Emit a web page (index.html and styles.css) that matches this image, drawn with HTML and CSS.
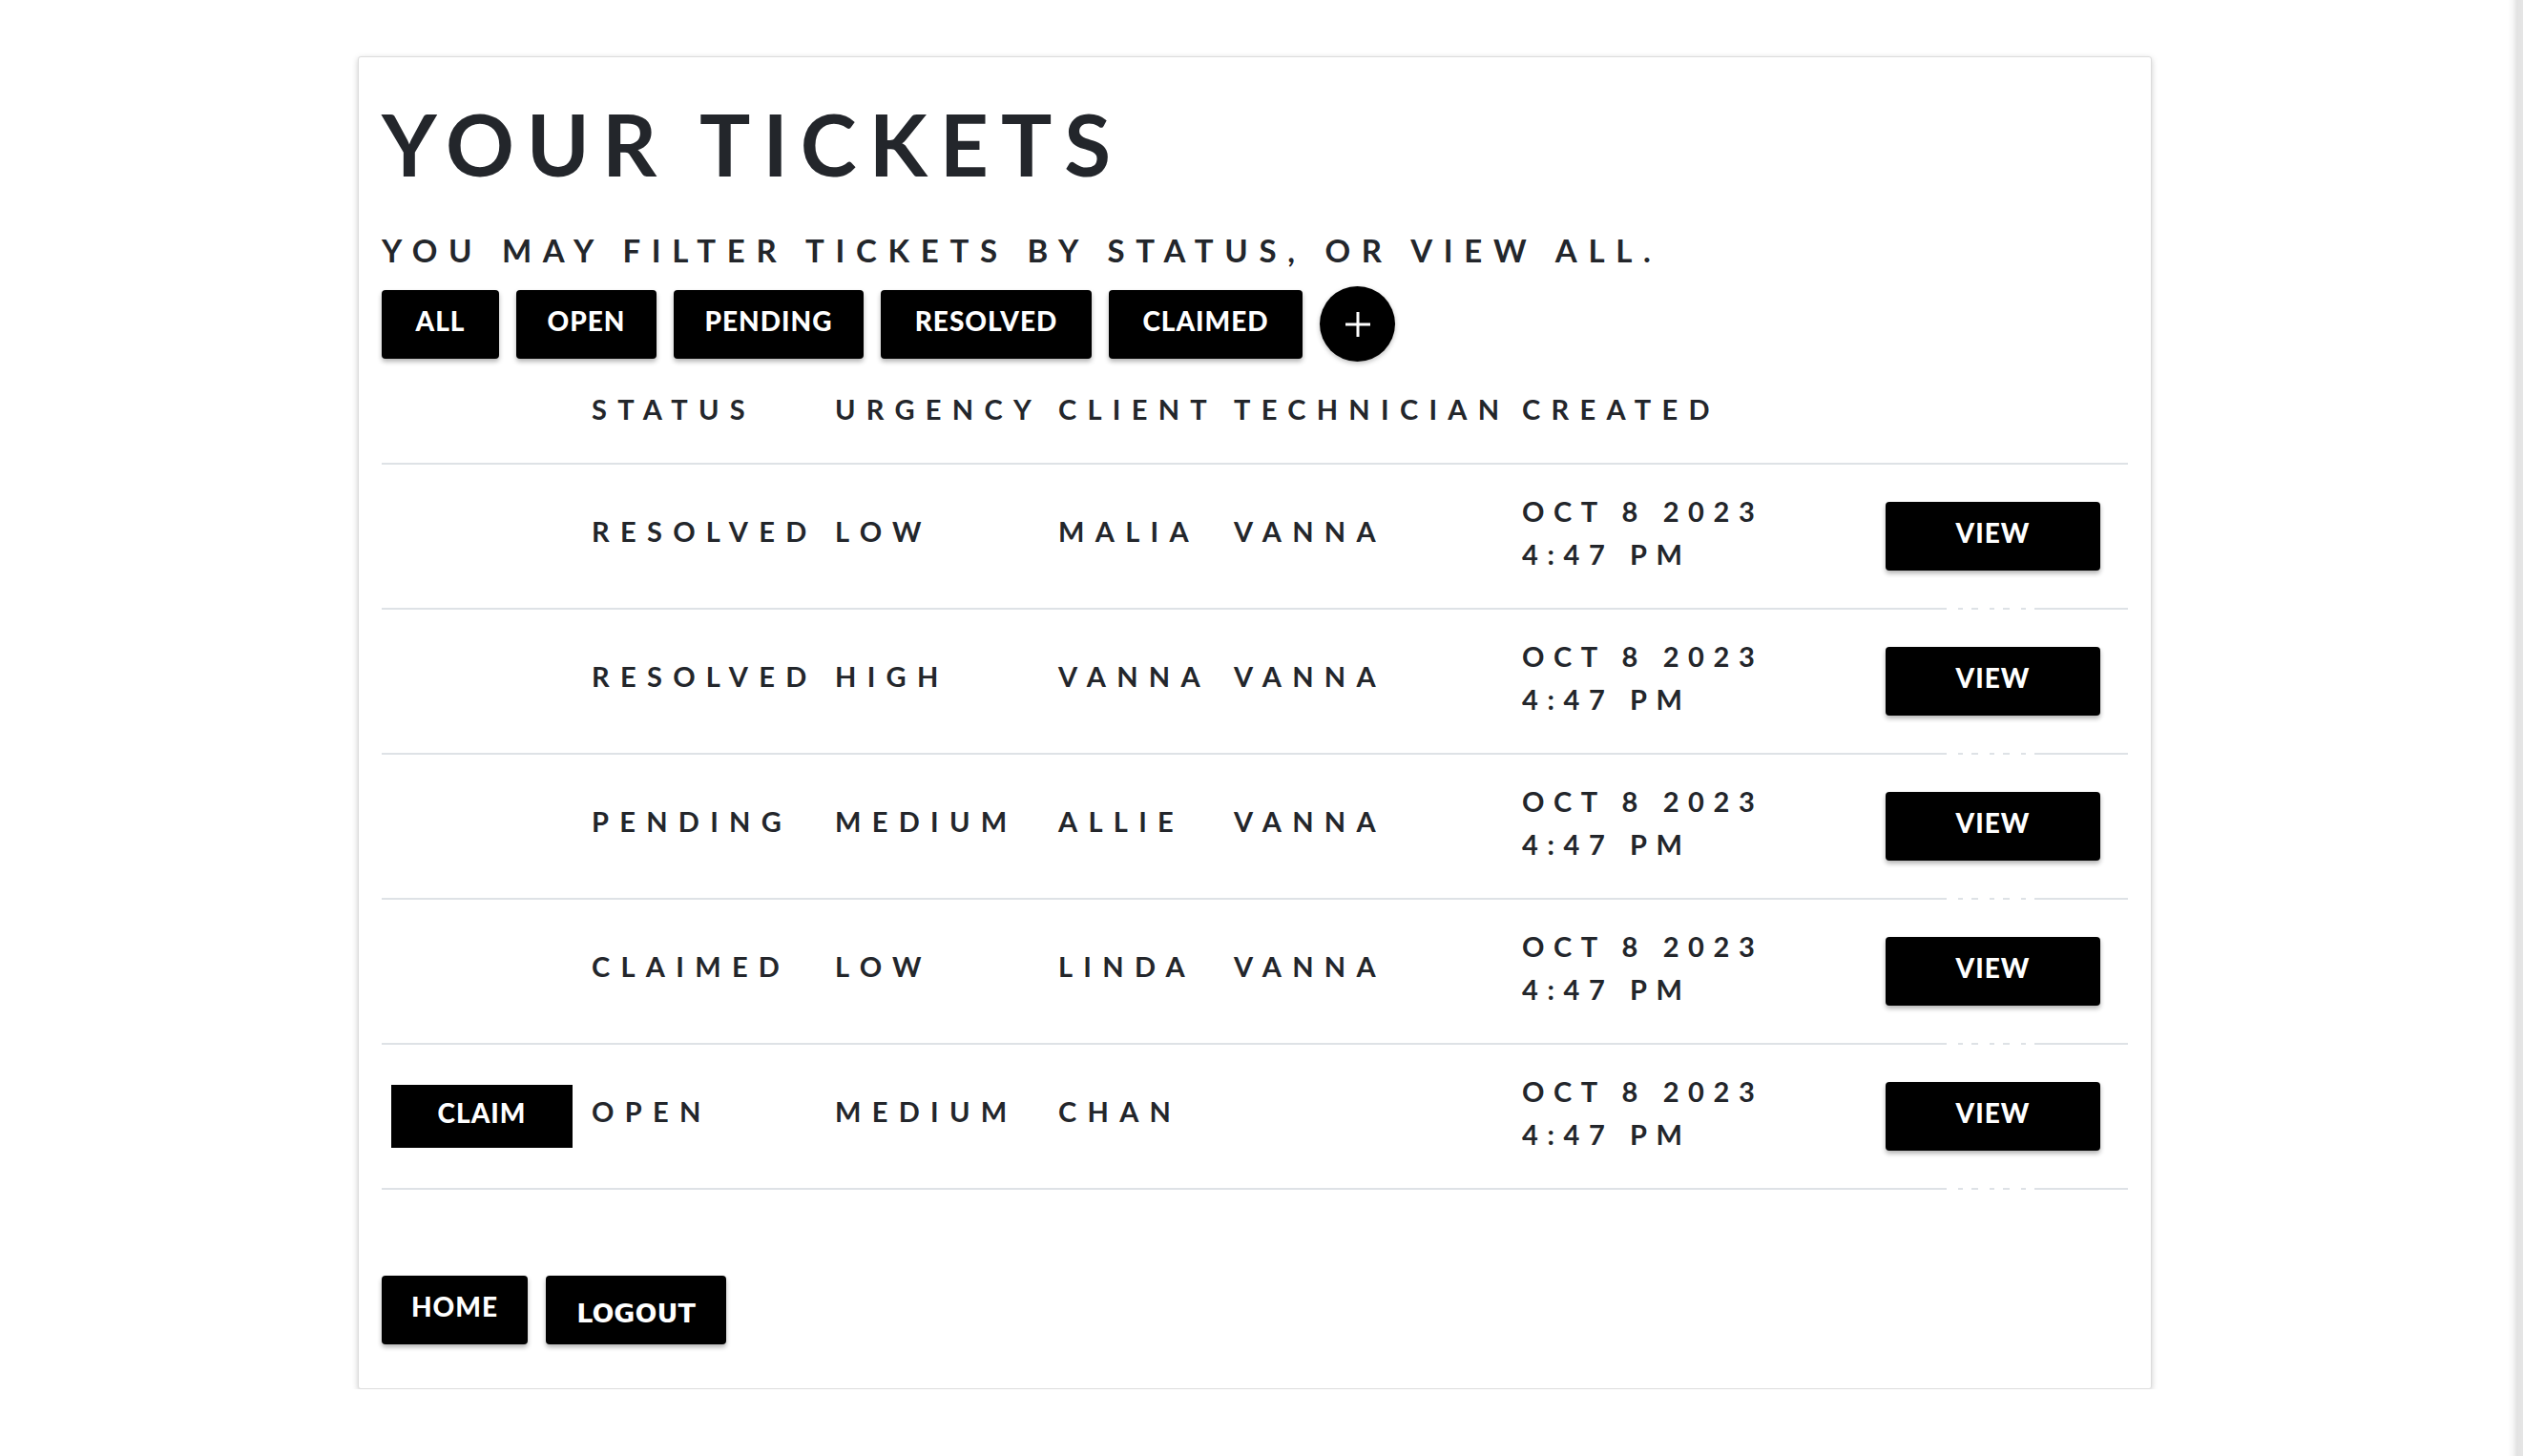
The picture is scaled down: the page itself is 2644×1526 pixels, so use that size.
FILE: index.html
```html
<!DOCTYPE html>
<html lang="en">
<head>
<meta charset="utf-8">
<title>Your Tickets</title>
<link rel="stylesheet" href="styles.css">
</head>
<body>
<div class="edge"></div>
<main class="card">
  <h1 class="title">YOUR TICKETS</h1>
  <p class="subtitle">YOU MAY FILTER TICKETS BY STATUS, OR VIEW ALL.</p>
  <div class="filters">
    <button class="btn f-all">ALL</button>
    <button class="btn f-open">OPEN</button>
    <button class="btn f-pending">PENDING</button>
    <button class="btn f-resolved">RESOLVED</button>
    <button class="btn f-claimed">CLAIMED</button>
    <button class="add" aria-label="New ticket">
      <svg width="28" height="28" viewBox="0 0 28 28"><path d="M14 1v26M1 14h26" stroke="#fff" stroke-width="3" fill="none"/></svg>
    </button>
  </div>

  <div class="table">
    <div class="thead">
      <span></span>
      <span class="th">STATUS</span>
      <span class="th">URGENCY</span>
      <span class="th">CLIENT</span>
      <span class="th">TECHNICIAN</span>
      <span class="th">CREATED</span>
      <span></span>
    </div>

    <div class="row">
      <span></span>
      <span class="td">RESOLVED</span>
      <span class="td">LOW</span>
      <span class="td">MALIA</span>
      <span class="td">VANNA</span>
      <span class="td date">OCT 8 2023<br>4:47 PM</span>
      <span class="action"><button class="btn view">VIEW</button></span>
      <span class="ghost"></span>
    </div>

    <div class="row">
      <span></span>
      <span class="td">RESOLVED</span>
      <span class="td">HIGH</span>
      <span class="td">VANNA</span>
      <span class="td">VANNA</span>
      <span class="td date">OCT 8 2023<br>4:47 PM</span>
      <span class="action"><button class="btn view">VIEW</button></span>
      <span class="ghost"></span>
    </div>

    <div class="row">
      <span></span>
      <span class="td">PENDING</span>
      <span class="td">MEDIUM</span>
      <span class="td">ALLIE</span>
      <span class="td">VANNA</span>
      <span class="td date">OCT 8 2023<br>4:47 PM</span>
      <span class="action"><button class="btn view">VIEW</button></span>
      <span class="ghost"></span>
    </div>

    <div class="row">
      <span></span>
      <span class="td">CLAIMED</span>
      <span class="td">LOW</span>
      <span class="td">LINDA</span>
      <span class="td">VANNA</span>
      <span class="td date">OCT 8 2023<br>4:47 PM</span>
      <span class="action"><button class="btn view">VIEW</button></span>
      <span class="ghost"></span>
    </div>

    <div class="row last">
      <span class="claimcell"><button class="claim">CLAIM</button></span>
      <span class="td">OPEN</span>
      <span class="td">MEDIUM</span>
      <span class="td">CHAN</span>
      <span class="td"></span>
      <span class="td date">OCT 8 2023<br>4:47 PM</span>
      <span class="action"><button class="btn view">VIEW</button></span>
      <span class="ghost"></span>
    </div>
  </div>

  <div class="footer">
    <button class="btn home">HOME</button>
    <button class="btn logout">LOGOUT</button>
  </div>
</main>
</body>
</html>
```

FILE: styles.css
```css
html, body {
  margin: 0;
  padding: 0;
  background: #ffffff;
}

body {
  padding-right: 14px;
  font-family: "Lato", "Inter", sans-serif;
  color: #212529;
}

.edge {
  position: fixed;
  top: 0;
  right: 0;
  bottom: 0;
  width: 16px;
  background: linear-gradient(90deg, rgba(0,0,0,0) 0, rgba(0,0,0,0.03) 30%, rgba(0,0,0,0.11) 60%, rgba(0,0,0,0.1) 100%);
}

.card {
  box-sizing: border-box;
  width: 1880px;
  margin: 59px auto 0;
  padding: 24px 24px 46px;
  background: #fff;
  border: 1px solid #dcdcdc;
  border-radius: 3px;
  box-shadow: 0 2px 6px rgba(0,0,0,0.2);
}

.title {
  margin: 14px 0 0;
  font-size: 89px;
  line-height: 1.2;
  font-weight: 700;
  letter-spacing: 13px;
  color: #23262b;
}

.subtitle {
  margin: 38px 0 0;
  font-size: 33px;
  line-height: 1.2;
  font-weight: 700;
  letter-spacing: 11.7px;
  color: #23262b;
}

.filters {
  display: flex;
  align-items: center;
  gap: 18px;
  margin-top: 18px;
  height: 79px;
}

.btn {
  box-sizing: border-box;
  height: 72px;
  padding: 0 0 8px;
  border: none;
  border-radius: 4px;
  background: #000;
  color: #fff;
  font-family: "Lato", sans-serif;
  font-weight: 900;
  font-size: 28px;
  letter-spacing: 1px;
  text-align: center;
  box-shadow: 0 3px 5px rgba(0,0,0,0.3);
  cursor: pointer;
}

.f-all { width: 123px; }
.f-open { width: 147px; }
.f-pending { width: 199px; }
.f-resolved { width: 221px; }
.f-claimed { width: 203px; }

.add {
  width: 79px;
  height: 79px;
  border-radius: 50%;
  border: none;
  background: #000;
  display: flex;
  align-items: center;
  justify-content: center;
  padding: 0;
  box-shadow: 0 2px 5px rgba(0,0,0,0.25);
}

.thead,
.row {
  display: grid;
  grid-template-columns: 220px 255px 234px 184px 302px 366px 270px;
  align-items: center;
}

.thead {
  padding-top: 33px;
  padding-bottom: 38px;
  border-bottom: 2px solid #dee2e6;
}

.th,
.td {
  font-size: 29px;
  line-height: 1.2;
  font-weight: 700;
  letter-spacing: 11.3px;
  color: #23262b;
  white-space: nowrap;
}

.row {
  position: relative;
  height: 152px;
  box-sizing: border-box;
  border-bottom: 2px solid #dee2e6;
}

.td {
  padding-bottom: 9px;
}

.td.date {
  line-height: 45px;
  letter-spacing: 9.6px;
}

.action {
  padding-left: 15px;
}

.view {
  width: 225px;
  height: 72px;
}

.claimcell {
  padding-left: 10px;
}

.claim {
  width: 190px;
  height: 66px;
  padding: 0 0 9px;
  border: none;
  border-radius: 0;
  background: #000;
  color: #fff;
  font-family: "Lato", sans-serif;
  font-weight: 900;
  font-size: 28px;
  letter-spacing: 1px;
}

.ghost {
  position: absolute;
  left: 1640px;
  bottom: -2px;
  width: 97px;
  height: 2px;
  background: repeating-linear-gradient(90deg, #fff 0 12px, transparent 12px 17px, #fff 17px 26px, transparent 26px 33px);
}

.footer {
  display: flex;
  gap: 19px;
  margin-top: 90px;
}

.home {
  width: 153px;
}

.logout {
  width: 189px;
  padding: 6px 0 0;
  font-family: "DejaVu Sans", sans-serif;
  font-weight: 700;
  font-size: 27px;
  letter-spacing: 0;
}
```
